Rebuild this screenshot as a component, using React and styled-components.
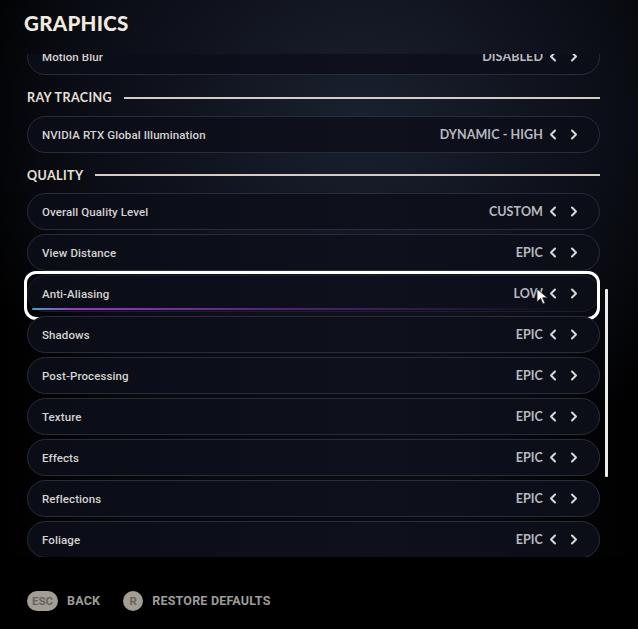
import styled, { createGlobalStyle, css } from 'styled-components';

const CREAM = '#f1eadf'
const ROW_BORDER = '#2a2d39'

const GlobalStyle = createGlobalStyle`
  html, body {
    margin: 0;
    padding: 0;
    background: #000;
  }
  #root {
    width: 638px;
    height: 629px;
  }
`

const Screen = styled.div`
  position: relative;
  width: 638px;
  height: 629px;
  overflow: hidden;
  display: flex;
  flex-direction: column;
  background:
    radial-gradient(ellipse 420px 360px at 360px 120px, rgba(30, 36, 52, 0.85) 0%, rgba(14, 17, 27, 0.9) 55%, rgba(0, 0, 0, 0) 100%),
    linear-gradient(90deg, #000 0%, #07080d 20%, #0a0c13 70%, #000 100%);
  font-family: Roboto, "Liberation Sans", sans-serif;
`

const Header = styled.div`
  height: 54px;
  flex-shrink: 0;
  display: flex;
  align-items: flex-start;
  padding: 11px 0 0 24px;
  box-sizing: border-box;
`

const Title = styled.h1`
  margin: 0;
  font-family: Lato, "Open Sans", sans-serif;
  font-weight: 900;
  font-size: 20.5px;
  letter-spacing: 0.3px;
  color: ${CREAM};
`

const ScrollArea = styled.div`
  height: 503px;
  flex-shrink: 0;
  display: flex;
  overflow: hidden;
  padding-left: 27px;
`

const List = styled.div`
  width: 573px;
  display: flex;
  flex-direction: column;
  margin-top: -16px;
`

const Track = styled.div`
  width: 3px;
  margin-left: 5px;
`

const Thumb = styled.div`
  width: 3px;
  height: 188px;
  margin-top: 235px;
  background: #ececec;
  border-radius: 1px;
`

const SectionHeader = styled.div`
  height: ${p => p.$h}px;
  flex-shrink: 0;
  display: flex;
  align-items: center;
  gap: 12px;
  font-family: Lato, "Open Sans", sans-serif;
  font-weight: 700;
  font-size: 12.5px;
  letter-spacing: 0.4px;
  color: #e6e1d6;
  &::after {
    content: '';
    flex: 1;
    height: 2px;
    background: #d3cec3;
  }
`

const Row = styled.div`
  position: relative;
  height: 37px;
  flex-shrink: 0;
  margin-bottom: 4px;
  display: flex;
  align-items: center;
  padding: 0 21px 0 14px;
  box-sizing: border-box;
  border: 1.5px solid ${ROW_BORDER};
  border-radius: 19px;
  background: linear-gradient(90deg, #0a0c16 0%, #0e111c 60%, #0b0d17 100%);
  ${p => p.$selected && css`
    border-color: #1c1f2b;
    &::before {
      content: '';
      position: absolute;
      left: 4px;
      right: 30px;
      bottom: 1px;
      height: 2px;
      border-radius: 2px;
      background: linear-gradient(90deg, rgba(90, 200, 230, 0.8) 0%, rgba(160, 60, 210, 0.95) 8%, rgba(130, 50, 180, 0.6) 45%, rgba(80, 40, 120, 0) 100%);
    }
    &::after {
      content: '';
      position: absolute;
      top: -5px;
      bottom: -9px;
      left: -4px;
      right: -1px;
      border: 3px solid #fff;
      border-radius: 12px;
    }
  `}
`

const Label = styled.span`
  flex: 1;
  font-size: 11.5px;
  font-weight: 500;
  letter-spacing: 0.1px;
  color: #d6d4d0;
`

const Value = styled.span`
  font-family: Lato, "Open Sans", sans-serif;
  font-size: 12.5px;
  font-weight: 700;
  letter-spacing: 0.1px;
  color: #b8b9bf;
  margin-right: 6px;
`

const Arrows = styled.div`
  display: flex;
  align-items: center;
  gap: 13px;
`

const Chevron = ({ dir }) => (
  <svg width="8" height="11" viewBox="0 0 8 11">
    <path
      d={dir === 'left' ? 'M6 1.5 L2 5.5 L6 9.5' : 'M2 1.5 L6 5.5 L2 9.5'}
      fill="none"
      stroke="#dadada"
      strokeWidth="2"
      strokeLinecap="round"
      strokeLinejoin="round"
    />
  </svg>
)

const Cursor = styled.svg`
  position: absolute;
  left: 536px;
  top: 288px;
`

const Footer = styled.div`
  flex: 1;
  display: flex;
  align-items: center;
  padding: 15px 0 0 27px;
  gap: 9px;
  background: #000;
`

const Key = styled.span`
  display: inline-flex;
  align-items: center;
  justify-content: center;
  height: 20px;
  min-width: ${p => (p.$round ? '20px' : '31px')};
  padding: ${p => (p.$round ? '0' : '0 4px')};
  box-sizing: border-box;
  border-radius: 10px;
  background: #a29e96;
  color: #67635d;
  font-size: 11.5px;
  font-weight: 700;
`

const Action = styled.span`
  font-size: 12.5px;
  font-weight: 700;
  letter-spacing: 0.2px;
  color: #9d9c9a;
  margin-right: 14px;
`

const sections = [
  { rows: [{ label: 'Motion Blur', value: 'DISABLED' }] },
  { title: 'RAY TRACING', h: 37, rows: [{ label: 'NVIDIA RTX Global Illumination', value: 'DYNAMIC - HIGH' }] },
  {
    title: 'QUALITY',
    h: 36,
    rows: [
      { label: 'Overall Quality Level', value: 'CUSTOM' },
      { label: 'View Distance', value: 'EPIC' },
      { label: 'Anti-Aliasing', value: 'LOW', selected: true },
      { label: 'Shadows', value: 'EPIC' },
      { label: 'Post-Processing', value: 'EPIC' },
      { label: 'Texture', value: 'EPIC' },
      { label: 'Effects', value: 'EPIC' },
      { label: 'Reflections', value: 'EPIC' },
      { label: 'Foliage', value: 'EPIC' },
    ],
  },
]

export default function App() {
  return (
    <>
      <GlobalStyle />
      <Screen>
        <Header>
          <Title>GRAPHICS</Title>
        </Header>
        <ScrollArea>
          <List>
            {sections.map((s, i) => (
              <div key={i} style={{ display: 'contents' }}>
                {s.title && <SectionHeader $h={s.h}>{s.title}</SectionHeader>}
                {s.rows.map(r => (
                  <Row key={r.label} $selected={r.selected}>
                    <Label>{r.label}</Label>
                    <Value>{r.value}</Value>
                    <Arrows>
                      <Chevron dir="left" />
                      <Chevron dir="right" />
                    </Arrows>
                  </Row>
                ))}
              </div>
            ))}
          </List>
          <Track>
            <Thumb />
          </Track>
        </ScrollArea>
        <Footer>
          <Key>ESC</Key>
          <Action>BACK</Action>
          <Key $round>R</Key>
          <Action>RESTORE DEFAULTS</Action>
        </Footer>
        <Cursor width="14" height="18" viewBox="0 0 14 18">
          <path d="M1 1 L1 14 L4.5 10.5 L7 16 L9 15 L6.6 9.8 L11.5 9.8 Z" fill="#fff" stroke="#222" strokeWidth="0.8" strokeLinejoin="round" />
        </Cursor>
      </Screen>
    </>
  );
}
